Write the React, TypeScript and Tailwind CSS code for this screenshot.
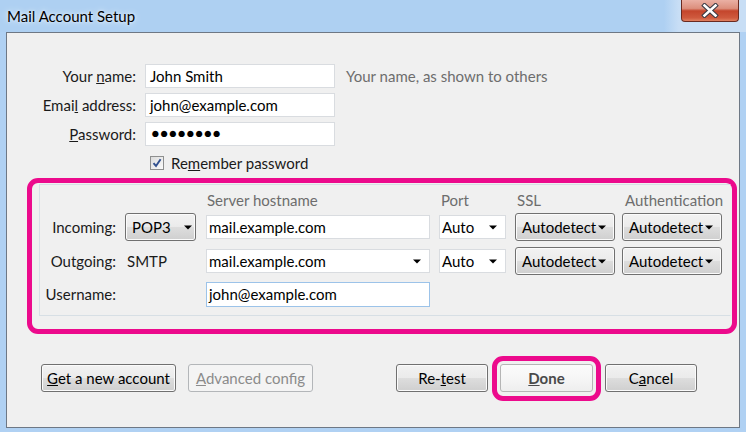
import React from 'react';

const font = "font-['Lato','Liberation_Sans',sans-serif]";

const winBtn =
  'h-[28px] rounded-[3px] border border-[#707070] bg-[linear-gradient(180deg,#f2f2f2_0%,#ebebeb_48%,#dddddd_52%,#cfcfcf_100%)] shadow-[inset_0_0_0_1px_#fbfbfb] text-[15px] text-black flex items-center';

const textBox =
  'h-[24px] bg-white border border-[#d9dce0] text-[15px] text-black flex items-center';

function Arrow() {
  return (
    <svg width="8" height="5" viewBox="0 0 8 5" className="shrink-0">
      <path d="M0 0.5h8L4 4.5z" fill="#000" />
    </svg>
  );
}

function MenuButton({ label, width, arrowGap }: { label: string; width: string; arrowGap: string }) {
  return (
    <div className={`${winBtn} ${width} pl-[6px]`}>
      <span className="leading-none">{label}</span>
      <span className={arrowGap}>
        <Arrow />
      </span>
    </div>
  );
}

function Checkbox() {
  return (
    <div className="w-[14px] h-[14px] border border-[#8e8f8f] bg-[linear-gradient(135deg,#dcdcdc,#fbfbfb)] flex items-center justify-center">
      <svg width="10" height="10" viewBox="0 0 10 10">
        <path d="M1.5 5.2L4 8L8.6 1.2" fill="none" stroke="#31508f" strokeWidth="1.9" />
      </svg>
    </div>
  );
}

export default function App() {
  const groupCols = 'grid grid-cols-[85px_81px_233px_76px_107px_100px] items-center';

  return (
    <div className={`${font} w-[746px] h-[432px] overflow-hidden bg-[#b0d1f3] relative`}>
      {/* title bar */}
      <div className="h-[32px] flex items-center pl-[7px] bg-[linear-gradient(90deg,#aed0f2_0%,#aed0f2_89%,#c8def5_91%,#c8def5_100%)]">
        <span className="text-[15px] text-black [text-shadow:0_0_7px_#e8f2fc,0_0_3px_#e8f2fc]">Mail Account Setup</span>
      </div>
      <div className="absolute top-0 right-[7px] w-[58px] h-[22px] rounded-b-[4px] border border-t-0 border-[#6a2a20] bg-[linear-gradient(180deg,#eab0a4_0%,#dc8f7d_40%,#c4452c_52%,#cf5a3e_85%,#e08060_100%)] flex items-center justify-center">
        <svg width="18" height="15" viewBox="0 0 18 15">
          <path d="M3.5 2.5L14.5 12.5M14.5 2.5L3.5 12.5" stroke="#3a3a44" strokeWidth="4.6" strokeLinecap="square" />
          <path d="M3.5 2.5L14.5 12.5M14.5 2.5L3.5 12.5" stroke="#ffffff" strokeWidth="2.6" strokeLinecap="square" />
        </svg>
      </div>

      {/* dialog body */}
      <div className="ml-[6px] w-[734px] h-[396px] border border-[#6e7885] bg-[#f0f0f0] flex flex-col">
        {/* identity fields */}
        <div className="pt-[31px] grid grid-cols-[138px_190px_1fr] gap-y-[5px] items-center">
          <label className="pr-[9px] text-right text-[15px] text-[#1a1a1a]">
            Your <u>n</u>ame:
          </label>
          <div className={`${textBox} pl-[4px]`}>John Smith</div>
          <span className="ml-[11px] text-[15px] text-[#6d6d6d]">Your name, as shown to others</span>

          <label className="pr-[9px] text-right text-[15px] text-[#1a1a1a]">
            Emai<u>l</u> address:
          </label>
          <div className={`${textBox} pl-[4px]`}>john@example.com</div>
          <span />

          <label className="pr-[9px] text-right text-[15px] text-[#1a1a1a]">
            <u>P</u>assword:
          </label>
          <div className={`${textBox} pl-[5px]`}>
            <span className="font-['Liberation_Sans',sans-serif] text-[14.5px]">●●●●●●●●</span>
          </div>
          <span />
        </div>

        <div className="mt-[10px] ml-[143px] h-[14px] flex items-center gap-[7px]">
          <Checkbox />
          <span className="text-[15px] text-[#1a1a1a]">
            Re<u>m</u>ember password
          </span>
        </div>

        {/* server settings */}
        <div className="mt-[8px] ml-[20px] mr-[2px] border-[5px] border-[#ec0a8c] rounded-[11px] pt-[1px] pb-[13px] pl-[7px] pr-[1px]">
          <div className="border border-[#d7dfe5] border-r-transparent pt-[4px] pb-[6px]">
            <div className={`${groupCols} h-[20px] text-[15px] text-[#6d6d6d]`}>
              <span />
              <span />
              <span className="pl-[1px]">Server hostname</span>
              <span className="pl-[2px]">Port</span>
              <span className="pl-[2px]">SSL</span>
              <span className="pl-[3px]">Authentication</span>
            </div>

            <div className={`${groupCols} h-[30px] mt-[3px]`}>
              <span className="pr-[9px] text-right text-[15px] text-[#1a1a1a]">Incoming:</span>
              <MenuButton label="POP3" width="w-[71px]" arrowGap="ml-[13px]" />
              <div className={`${textBox} w-[224px] pl-[2px]`}>mail.example.com</div>
              <div className={`${textBox} w-[67px] pl-[2px] justify-between pr-[8px]`}>
                <span>Auto</span>
                <Arrow />
              </div>
              <MenuButton label="Autodetect" width="w-[100px]" arrowGap="ml-[2px]" />
              <MenuButton label="Autodetect" width="w-[100px]" arrowGap="ml-[2px]" />
            </div>

            <div className={`${groupCols} h-[30px] mt-[4px]`}>
              <span className="pr-[9px] text-right text-[15px] text-[#1a1a1a]">Outgoing:</span>
              <span className="pl-[2px] text-[15px] text-[#1a1a1a]">SMTP</span>
              <div className={`${textBox} w-[224px] pl-[2px] justify-between pr-[8px]`}>
                <span>mail.example.com</span>
                <Arrow />
              </div>
              <div className={`${textBox} w-[67px] pl-[2px] justify-between pr-[8px]`}>
                <span>Auto</span>
                <Arrow />
              </div>
              <MenuButton label="Autodetect" width="w-[100px]" arrowGap="ml-[2px]" />
              <MenuButton label="Autodetect" width="w-[100px]" arrowGap="ml-[2px]" />
            </div>

            <div className={`${groupCols} h-[30px] mt-[3px]`}>
              <span className="pr-[9px] text-right text-[15px] text-[#1a1a1a]">Username:</span>
              <span />
              <div className="h-[25px] w-[224px] bg-white border border-[#9cc3e9] pl-[2px] text-[15px] text-black flex items-center">
                john@example.com
              </div>
            </div>
          </div>
        </div>

        {/* buttons */}
        <div className="mt-[30px] pl-[34px] pr-[42px] flex justify-between items-center">
          <div className="flex gap-[12px]">
            <button className={`${winBtn} w-[135px] justify-center`}>
              <span>
                <u>G</u>et a new account
              </span>
            </button>
            <button className="h-[28px] w-[125px] rounded-[3px] border border-[#b3b6b9] bg-[#f4f4f4] text-[15px] text-[#8b8b8b] flex items-center justify-center">
              <span>
                <u>A</u>dvanced config
              </span>
            </button>
          </div>
          <div className="flex gap-[12px]">
            <button className={`${winBtn} w-[92px] justify-center`}>
              <span>
                Re-<u>t</u>est
              </span>
            </button>
            <div className="relative">
              <button className="h-[28px] w-[93px] rounded-[3px] border border-[#b5b5b5] bg-[linear-gradient(180deg,#fbfbfb_0%,#f6f6f6_50%,#eeeeee_100%)] text-[15px] font-bold text-[#4a4a4a] flex items-center justify-center">
                <span>
                  <u>D</u>one
                </span>
              </button>
              <div className="absolute -left-[8px] -right-[8px] -top-[8px] -bottom-[9px] border-[5px] border-[#ec0a8c] rounded-[11px] pointer-events-none" />
            </div>
            <button className={`${winBtn} w-[92px] justify-center`}>
              <span>
                C<u>a</u>ncel
              </span>
            </button>
          </div>
        </div>
      </div>
    </div>
  );
}
